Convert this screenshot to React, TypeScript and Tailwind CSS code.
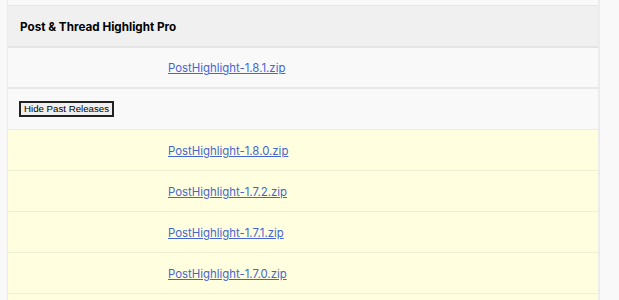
const releases = [
  'PostHighlight-1.8.0.zip',
  'PostHighlight-1.7.2.zip',
  'PostHighlight-1.7.1.zip',
  'PostHighlight-1.7.0.zip',
]

export default function App() {
  return (
    <div className="h-[300px] overflow-hidden bg-[#f9f9f9] font-['Inter',sans-serif]">
      <div className="flex">
        <div className="w-[8px] shrink-0 border-r border-[#ececec]" />
        <div className="w-[590px] shrink-0">
          <div className="h-[6px] border-b border-[#e6e6e6]" />
          <div className="h-[42px] flex items-center pl-[12px] pt-[4px] bg-[#f0f0f0] border-b-2 border-[#e4e4e4]">
            <span className="text-[11.7px] font-bold text-black">Post &amp; Thread Highlight Pro</span>
          </div>
          <div className="h-[41px] flex items-center pl-[160px] pt-[3px] bg-[#f9f9f9] border-b-2 border-[#e8e8e8]">
            <a href="#" className="text-[11.4px] text-[#4565d0] underline">PostHighlight-1.8.1.zip</a>
          </div>
          <div className="h-[40px] flex items-center pl-[11px] bg-[#f9f9f9]">
            <button className="h-[16px] px-[3px] bg-[#efefef] border-2 border-[#222] text-[9.7px] leading-none text-black font-['Liberation_Sans',sans-serif]">
              Hide Past Releases
            </button>
          </div>
          {releases.map((r) => (
            <div key={r} className="h-[41px] flex items-center pl-[160px] pt-[3px] bg-[#ffffe0] border-t border-[#efefd6]">
              <a href="#" className="text-[11.4px] text-[#4565d0] underline">{r}</a>
            </div>
          ))}
          <div className="h-[41px] bg-[#ffffe0] border-t border-[#efefd6]" />
        </div>
        <div className="flex-1 border-l-2 border-[#ececec]" />
      </div>
    </div>
  )
}
